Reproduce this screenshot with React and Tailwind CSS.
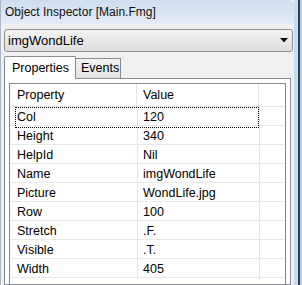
const rows = [
  ['Col', '120'],
  ['Height', '340'],
  ['HelpId', 'Nil'],
  ['Name', 'imgWondLife'],
  ['Picture', 'WondLife.jpg'],
  ['Row', '100'],
  ['Stretch', '.F.'],
  ['Visible', '.T.'],
  ['Width', '405'],
];

export default function App() {
  return (
    <div className="w-[302px] h-[285px] overflow-hidden flex bg-[#f0f0f0] text-black font-['Liberation_Sans',Arial,sans-serif]">
      {/* left frame */}
      <div className="w-px bg-[#a8b6c6]" />

      <div className="flex-1 flex flex-col min-w-0">
        {/* title bar */}
        <div className="h-[24px] shrink-0 flex items-center pl-[4px] bg-gradient-to-b from-[#cfddef] to-[#e4ecf6] rounded-tr-[6px] text-[12px] text-[#111]">
          Object Inspector [Main.Fmg]
        </div>

        <div className="flex-1 flex flex-col pl-[3px] pr-px pt-[5px] min-h-0">
          {/* combo */}
          <div className="h-[23px] shrink-0 flex items-center justify-between rounded-[3px] border border-[#8e8f8f] bg-gradient-to-b from-[#f4f4f4] to-[#dddddd] pl-[3px] pr-[4px] text-[13px]">
            <span>imgWondLife</span>
            <svg width="8" height="5" viewBox="0 0 8 5">
              <path d="M0 0H8L4 4.5Z" fill="#111" />
            </svg>
          </div>

          {/* tabs */}
          <div className="mt-[4px] mr-[2px] flex items-end h-[23px] shrink-0 relative z-10">
            <div className="h-[23px] w-[72px] border border-b-0 border-[#898c95] bg-white rounded-t-[2px] flex items-center pl-[7px] text-[12.5px]">
              Properties
            </div>
            <div className="h-[20px] w-[45px] border border-l-0 border-b-0 border-[#898c95] bg-gradient-to-b from-[#f3f3f3] to-[#e2e2e2] flex items-center pl-[5px] text-[12.5px] mb-px">
              Events
            </div>
          </div>

          {/* panel */}
          <div className="flex-1 mr-[2px] -mt-px border border-[#898c95] bg-white pl-[4px] pr-[4px] pt-[4px] min-h-0">
            <div className="h-full border border-b-0 border-[#828790] bg-white">
              <div className="grid grid-cols-[127px_122px_1fr] h-[23px] border-b border-[#e5e5e5] text-[12.5px]">
                <div className="pl-[7px] flex items-center border-r border-[#e5e5e5]">Property</div>
                <div className="pl-[6px] flex items-center border-r border-[#e5e5e5]">Value</div>
                <div />
              </div>
              {rows.map(([k, v], i) => (
                <div
                  key={k}
                  className="grid grid-cols-[127px_122px_1fr] h-[19px] border-b border-[#e8e8e8] text-[12.5px]"
                >
                  <div
                    className={
                      i === 0
                        ? 'col-span-2 grid grid-cols-[121px_122px] ml-[5px] border border-dotted border-black'
                        : 'col-span-2 grid grid-cols-[121px_122px] ml-[5px] border border-transparent'
                    }
                  >
                    <div className="pl-[1px] flex items-center border-r border-[#e5e5e5] -mr-px">{k}</div>
                    <div className="pl-[6px] flex items-center">{v}</div>
                  </div>
                  <div className="border-l border-[#e5e5e5]" />
                </div>
              ))}
            </div>
          </div>
        </div>
      </div>

      {/* right frame */}
      <div className="w-[8px] flex">
        <div className="w-[4px] bg-[#c9dcee]" />
        <div className="w-[2px] bg-[#2c3e52]" />
        <div className="w-[2px] bg-[#b7c9dc]" />
      </div>
    </div>
  );
}
